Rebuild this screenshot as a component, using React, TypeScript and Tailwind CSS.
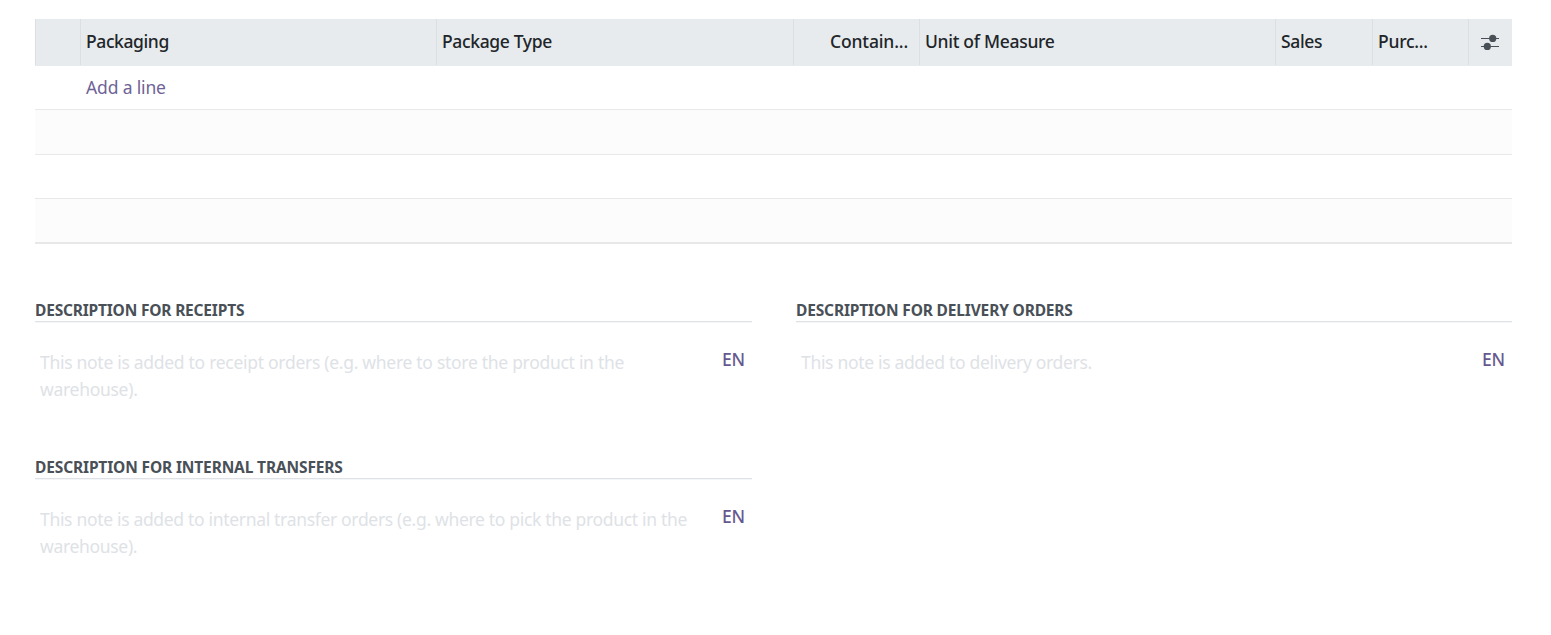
import React from 'react';

interface Column {
    id: string;
    label: string;
    className: string;
}

interface NoteField {
    id: string;
    title: string;
    titleClass: string;
    placeholder: string;
    placeholderClass: string;
}

const COLUMNS: Column[] = [
    { id: 'handle', label: '', className: '' },
    { id: 'packaging', label: 'Packaging', className: 'tracking-[-0.4px]' },
    { id: 'package-type', label: 'Package Type', className: 'tracking-[-0.35px]' },
    { id: 'contained', label: 'Contain...', className: 'text-right pr-[11px] tracking-[-0.15px]' },
    { id: 'uom', label: 'Unit of Measure', className: 'tracking-[-0.3px]' },
    { id: 'sales', label: 'Sales', className: 'tracking-[-0.35px]' },
    { id: 'purchase', label: 'Purc...', className: 'tracking-[-0.25px]' },
];

const NOTES: NoteField[] = [
    {
        id: 'receipts',
        title: 'Description for Receipts',
        titleClass: 'tracking-[-0.19px]',
        placeholder: 'This note is added to receipt orders (e.g. where to store the product in the warehouse).',
        placeholderClass: 'tracking-[-0.29px]',
    },
    {
        id: 'delivery',
        title: 'Description for Delivery Orders',
        titleClass: 'tracking-[-0.16px]',
        placeholder: 'This note is added to delivery orders.',
        placeholderClass: 'tracking-[-0.32px]',
    },
    {
        id: 'internal',
        title: 'Description for Internal Transfers',
        titleClass: 'tracking-[-0.14px]',
        placeholder: 'This note is added to internal transfer orders (e.g. where to pick the product in the warehouse).',
        placeholderClass: 'tracking-[-0.32px]',
    },
];

const SlidersIcon = () => (
    <svg className="mr-px" width="20" height="18" viewBox="0 0 20 18" fill="#495057">
        <path d="M1 5h18v1H1zM1 13h18v1H1z" />
        <circle cx="12.7" cy="5.4" r="3.6" />
        <circle cx="7.3" cy="13.4" r="3.6" />
    </svg>
);

const PackagingTable = () => (
    <div>
        <div className="grid grid-cols-[45px_356px_357px_126px_356px_97px_96px_44px] h-[47px] bg-[#e7ebed] text-[#212529] font-medium">
            {COLUMNS.map((column) => (
                <div key={column.id} className={`h-[46px] pl-[5px] leading-[45px] whitespace-nowrap border-l border-[#dbdfe3] ${column.className}`}>
                    {column.label}
                </div>
            ))}
            <button className="h-[46px] flex items-center justify-center border-l border-[#dbdfe3]">
                <SlidersIcon />
            </button>
        </div>
        <div className="h-11 pl-[51px] leading-[43px] border-b border-[#e6e8ea]">
            <button className="text-[#6f6396] tracking-[-0.15px]">Add a line</button>
        </div>
        <div className="h-[45px] bg-[#fcfcfc] border-b border-[#e6e8ea]" />
        <div className="h-11 border-b border-[#e6e8ea]" />
        <div className="h-[45px] bg-[#fcfcfc] border-b-2 border-[#e6e8ea]" />
    </div>
);

const NoteSection = ({ note }: { note: NoteField }) => (
    <section className="h-[157px]">
        <h2 className={`h-[23px] text-[15.5px] leading-[23px] font-bold uppercase text-[#495057] border-b border-[#dee2e6] shadow-[0_1px_0_#f5f6f7] ${note.titleClass}`}>
            {note.title}
        </h2>
        <div className="flex items-start justify-between pl-[5px] pr-[7px] pt-[27px]">
            <p className={`w-[660px] leading-[27px] text-[#dee2e6] ${note.placeholderClass}`}>{note.placeholder}</p>
            <button className="leading-[21px] font-medium text-[#66598f] tracking-[-0.2px]">EN</button>
        </div>
    </section>
);

export default function App() {
    return (
        <main className="h-[635px] bg-white pt-[19px] pl-[35px] pr-[39px] text-[17.5px] font-['Noto_Sans','Open_Sans',sans-serif]">
            <PackagingTable />
            <div className="grid grid-cols-[717px_716px] gap-x-11 mt-[55px]">
                {NOTES.map((note) => (
                    <NoteSection key={note.id} note={note} />
                ))}
            </div>
        </main>
    );
}
